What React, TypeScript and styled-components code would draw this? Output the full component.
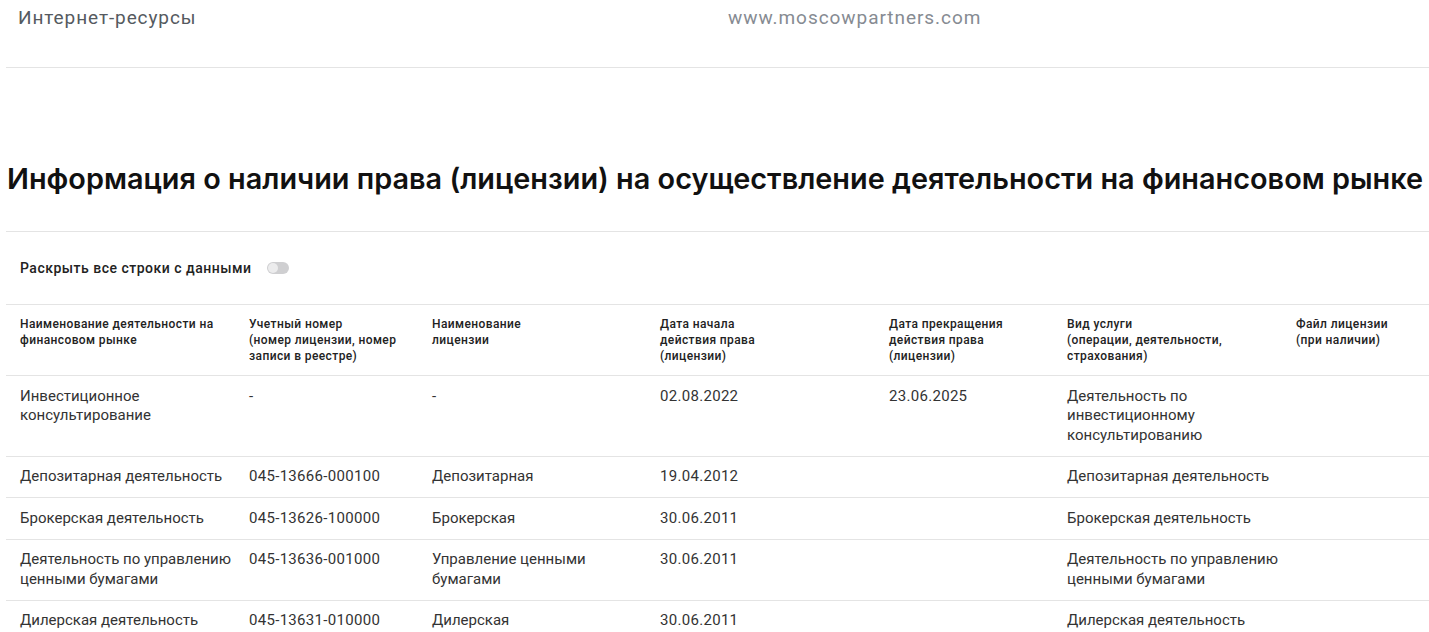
import React from "react";
import styled, { createGlobalStyle } from "styled-components";

const GlobalStyle = createGlobalStyle`
  html, body { margin: 0; padding: 0; background: #fff; }
  body { font-family: Roboto, "Liberation Sans", Arial, sans-serif; color: #222; overflow: hidden; }
`;

const Page = styled.div`
  padding-left: 6px;
  width: 1423px;
`;

const InfoRow = styled.div`
  display: grid;
  grid-template-columns: 711px 1fr;
  height: 68px;
  border-bottom: 1px solid #e4e4e4;
  box-sizing: border-box;
`;

const InfoLabel = styled.div`
  padding: 7px 12px 0;
  font-size: 19px;
  line-height: 22px;
  color: #555a60;
  letter-spacing: 0.9px;
`;

const InfoValue = styled.div`
  padding: 7px 11px 0;
  font-size: 19px;
  line-height: 22px;
  color: #868b92;
  letter-spacing: 0.95px;
`;

const Title = styled.h2`
  margin: 0;
  padding: 93px 0 34px 1px;
  font-family: Inter, "Liberation Sans", sans-serif;
  font-weight: 600;
  font-size: 28.85px;
  line-height: 36px;
  color: #111;
  white-space: nowrap;
  border-bottom: 1px solid #e4e4e4;
`;

const ToggleRow = styled.div`
  display: flex;
  align-items: center;
  gap: 15px;
  padding: 28px 14px 28px;
  height: 16px;
`;

const ToggleLabel = styled.span`
  font-size: 14px;
  font-weight: 500;
  letter-spacing: 0.5px;
  color: #222;
`;

const Switch = styled.span`
  position: relative;
  width: 22px;
  height: 12px;
  border-radius: 6px;
  background: #cfcfd1;
  display: inline-block;
  &::after {
    content: "";
    position: absolute;
    left: 1px;
    top: 1px;
    width: 10px;
    height: 10px;
    border-radius: 50%;
    background: #ececed;
  }
`;

const Table = styled.table`
  border-collapse: collapse;
  width: 1423px;
  table-layout: fixed;
`;

const HeadCell = styled.th<{ $w?: number }>`
  box-sizing: border-box;
  width: ${(p) => (p.$w ? `${p.$w}px` : "auto")};
  text-align: left;
  vertical-align: top;
  padding: 11px 4px 11px 14px;
  font-size: 12px;
  line-height: 16px;
  font-weight: 500;
  letter-spacing: 0.4px;
  color: #222;
  border-top: 1px solid #e4e4e4;
  border-bottom: 1px solid #e4e4e4;
`;

const Cell = styled.td<{ $num?: boolean }>`
  vertical-align: top;
  padding: 10.5px 0 10.5px 14px;
  font-size: 15px;
  line-height: 19.5px;
  letter-spacing: ${(p) => (p.$num ? "0.3px" : "0")};
  color: #333;
  border-bottom: 1px solid #e4e4e4;
`;

const columns: { title: string[]; w?: number }[] = [
  { title: ["Наименование деятельности на", "финансовом рынке"], w: 229 },
  { title: ["Учетный номер", "(номер лицензии, номер", "записи в реестре)"], w: 183 },
  { title: ["Наименование", "лицензии"], w: 228 },
  { title: ["Дата начала", "действия права", "(лицензии)"], w: 229 },
  { title: ["Дата прекращения", "действия права", "(лицензии)"], w: 178 },
  { title: ["Вид услуги", "(операции, деятельности,", "страхования)"], w: 229 },
  { title: ["Файл лицензии", "(при наличии)"] },
];

const rows: string[][] = [
  [
    "Инвестиционное консультирование",
    "-",
    "-",
    "02.08.2022",
    "23.06.2025",
    "Деятельность по инвестиционному консультированию",
    "",
  ],
  [
    "Депозитарная деятельность",
    "045-13666-000100",
    "Депозитарная",
    "19.04.2012",
    "",
    "Депозитарная деятельность",
    "",
  ],
  [
    "Брокерская деятельность",
    "045-13626-100000",
    "Брокерская",
    "30.06.2011",
    "",
    "Брокерская деятельность",
    "",
  ],
  [
    "Деятельность по управлению ценными бумагами",
    "045-13636-001000",
    "Управление ценными бумагами",
    "30.06.2011",
    "",
    "Деятельность по управлению ценными бумагами",
    "",
  ],
  [
    "Дилерская деятельность",
    "045-13631-010000",
    "Дилерская",
    "30.06.2011",
    "",
    "Дилерская деятельность",
    "",
  ],
];

export default function App() {
  return (
    <Page>
      <GlobalStyle />
      <InfoRow>
        <InfoLabel>Интернет-ресурсы</InfoLabel>
        <InfoValue>www.moscowpartners.com</InfoValue>
      </InfoRow>
      <Title>Информация о наличии права (лицензии) на осуществление деятельности на финансовом рынке</Title>
      <ToggleRow>
        <ToggleLabel>Раскрыть все строки с данными</ToggleLabel>
        <Switch />
      </ToggleRow>
      <Table>
        <thead>
          <tr>
            {columns.map((c, i) => (
              <HeadCell key={i} $w={c.w}>
                {c.title.map((t, j) => (
                  <React.Fragment key={j}>
                    {t}
                    {j < c.title.length - 1 && <br />}
                  </React.Fragment>
                ))}
              </HeadCell>
            ))}
          </tr>
        </thead>
        <tbody>
          {rows.map((r, i) => (
            <tr key={i}>
              {r.map((v, j) => (
                <Cell key={j} $num={/\d/.test(v)}>
                  {v}
                </Cell>
              ))}
            </tr>
          ))}
        </tbody>
      </Table>
    </Page>
  );
}
